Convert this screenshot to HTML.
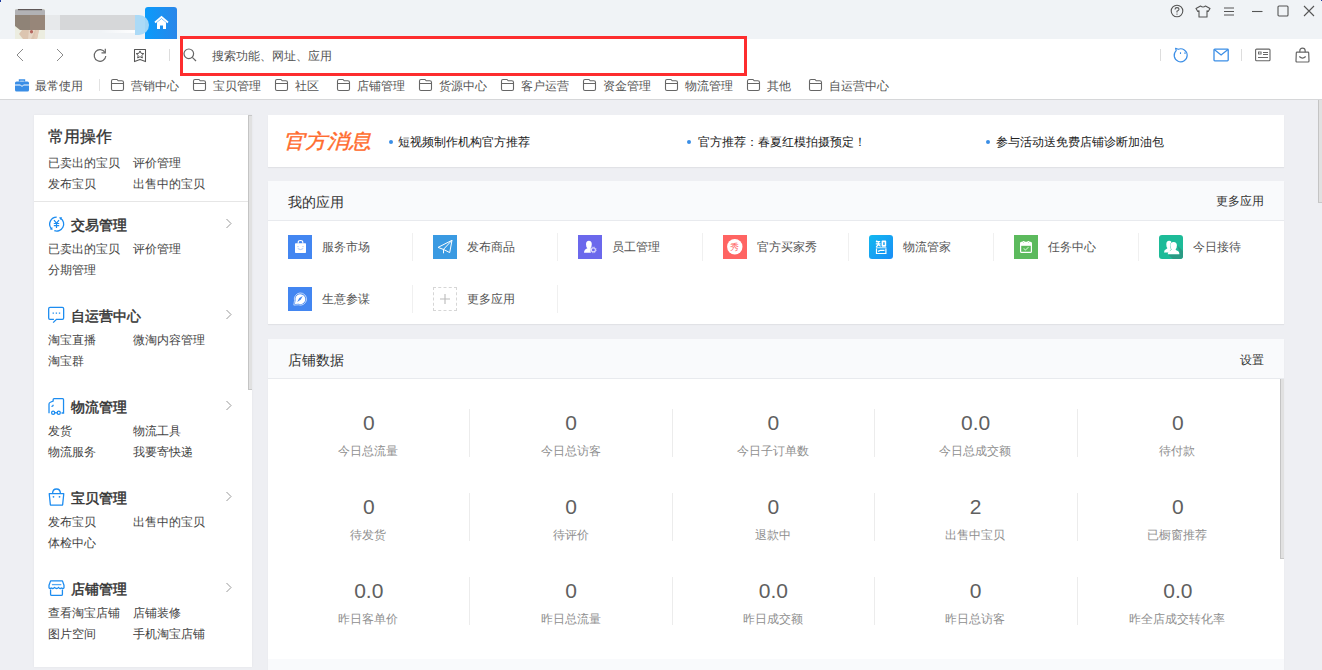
<!DOCTYPE html>
<html><head><meta charset="utf-8">
<style>
*{margin:0;padding:0;box-sizing:border-box}
html,body{width:1322px;height:670px;overflow:hidden}
body{position:relative;background:#eeeff3;font-family:"Liberation Sans",sans-serif;font-size:12px;color:#333}
.a{position:absolute}
.t{position:absolute;white-space:nowrap;line-height:16px}
svg{position:absolute;overflow:visible}
</style></head><body>

<!-- TITLE BAR -->
<div class="a" style="left:0;top:0;width:1322px;height:39px;background:#f0f3f6"></div>
<div class="a" style="left:0;top:0;width:1px;height:2px;background:#1d3aa0"></div>
<div class="a" style="left:1321px;top:0;width:1px;height:1px;background:#1d3aa0"></div>
<!-- avatar -->
<svg style="left:15px;top:9px" width="30" height="30" viewBox="0 0 30 30"><rect x="0" y="0" width="30" height="30" fill="#ecede0"/><path d="M7 21 L24 21 L22 30 L8 30 L4 25 Z" fill="#dcc5b0"/><path d="M14 21 L20 21 L16 30 L13 30 Z" fill="#e6d6c6"/><path d="M21 21 L24 21 L22 30 L19 30 Z" fill="#e3cbb8"/><ellipse cx="16.5" cy="22.8" rx="1.6" ry="1.8" fill="#b4655d"/><path d="M0 1.5 Q0 0 3 0 H27 Q30 0 30 2 V6 H0 Z" fill="#b2b2b5"/><path d="M3 0.6 H27" stroke="#5f5757" stroke-width="1.2"/><path d="M0 6 H30 V21 H5 L0 17 Z" fill="#8f8377"/><rect x="15" y="6" width="15" height="15" fill="#978679"/></svg>
<!-- blurred name -->
<div class="a" style="left:45px;top:15px;width:15px;height:15px;background:#e7e9eb"></div>
<div class="a" style="left:60px;top:15px;width:75px;height:15px;background:#d6d7d9"></div>
<div class="a" style="left:100px;top:30px;width:35px;height:3px;background:linear-gradient(90deg,rgba(255,255,255,0),rgba(255,255,255,0.9))"></div>
<!-- home tab -->
<div class="a" style="left:145px;top:7px;width:32px;height:32px;border-radius:3px 3px 0 0;background:linear-gradient(90deg,#0a9bfb,#2a86e9)"></div>
<svg style="left:154px;top:16px" width="15" height="13" viewBox="0 0 15 13"><path d="M1 6.5 L7.5 1 L14 6.5" fill="none" stroke="#fff" stroke-width="1.8"/><path d="M3 6.5 L7.5 2.7 L12 6.5 V13 H9 V9.5 H6 V13 H3 Z" fill="#fff"/></svg>

<div class="a" style="left:135px;top:15px;width:14px;height:20px;border-radius:0 10px 10px 0;background:#a6d8f7;opacity:0.95"></div>
<!-- window controls -->
<svg style="left:1170px;top:4px" width="14" height="14" viewBox="0 0 14 14"><circle cx="7" cy="7" r="5.8" fill="none" stroke="#555" stroke-width="1.1"/><path d="M5 5.4 Q5 3.6 7 3.6 Q9 3.6 9 5.3 Q9 6.4 7 7.2 V8.4" fill="none" stroke="#555" stroke-width="1.1"/><circle cx="7" cy="10.1" r="0.7" fill="#555"/></svg>
<svg style="left:1195px;top:5px" width="16" height="13" viewBox="0 0 16 13"><path d="M5.5 1 L1 3.5 L2.8 6.5 L4 5.8 V12 H12 V5.8 L13.2 6.5 L15 3.5 L10.5 1 Q8 3 5.5 1 Z" fill="none" stroke="#555" stroke-width="1.1" stroke-linejoin="round"/></svg>
<svg style="left:1223px;top:7px" width="12" height="10" viewBox="0 0 12 10"><path d="M1 1 H11 M1 4.5 H11 M1 8 H11" stroke="#555" stroke-width="1.1"/></svg>
<svg style="left:1252px;top:10px" width="11" height="3" viewBox="0 0 11 3"><path d="M0 1.5 H10.5" stroke="#555" stroke-width="1.1"/></svg>
<svg style="left:1277px;top:5px" width="12" height="12" viewBox="0 0 12 12"><rect x="1" y="1" width="10" height="10" rx="1" fill="none" stroke="#555" stroke-width="1.1"/></svg>
<svg style="left:1303px;top:5px" width="12" height="12" viewBox="0 0 12 12"><path d="M1 1 L11 11 M11 1 L1 11" stroke="#555" stroke-width="1.1"/></svg>

<!-- TOOLBAR -->
<div class="a" style="left:0;top:39px;width:1322px;height:60px;background:#fff"></div>
<div class="a" style="left:0;top:99px;width:1322px;height:1px;background:#d6d7d9"></div>
<svg style="left:16px;top:48px" width="8" height="14" viewBox="0 0 8 14"><path d="M7 1 L1 7 L7 13" fill="none" stroke="#8a8a8a" stroke-width="1"/></svg>
<svg style="left:56px;top:48px" width="8" height="14" viewBox="0 0 8 14"><path d="M1 1 L7 7 L1 13" fill="none" stroke="#8a8a8a" stroke-width="1"/></svg>
<svg style="left:93px;top:48px" width="14" height="14" viewBox="0 0 14 14"><path d="M12 4.5 A5.8 5.8 0 1 0 12.8 8" fill="none" stroke="#666" stroke-width="1.2"/><path d="M12.3 0.8 V4.8 H8.5" fill="none" stroke="#666" stroke-width="1.2"/></svg>
<svg style="left:133px;top:48px" width="14" height="15" viewBox="0 0 14 15"><path d="M1.5 1.5 H12.5 V13.6 L7 11.6 L1.5 13.6 Z" fill="none" stroke="#555" stroke-width="1.05" stroke-linejoin="round"/><path d="M7 2.9 L8.12 5.3 L10.8 5.6 L8.81 7.4 L9.35 10 L7 8.7 L4.65 10 L5.19 7.4 L3.2 5.6 L5.88 5.3 Z" fill="none" stroke="#555" stroke-width="1" stroke-linejoin="round"/></svg>
<div class="a" style="left:169px;top:49px;width:1px;height:12px;background:#ddd"></div>

<!-- search box -->
<div class="a" style="left:180px;top:36px;width:567px;height:40px;border:3px solid #fd2d2e;background:#fff"></div>
<svg style="left:183px;top:48px" width="14" height="14" viewBox="0 0 14 14"><circle cx="5.8" cy="5.8" r="4.8" fill="none" stroke="#666" stroke-width="1.2"/><path d="M9.3 9.3 L13 13" stroke="#666" stroke-width="1.2"/></svg>
<div class="t" style="left:212px;top:48px;color:#555">搜索功能、网址、应用</div>

<!-- right icons -->
<div class="a" style="left:1160px;top:49px;width:1px;height:12px;background:#ddd"></div>
<svg style="left:1172px;top:47px" width="17" height="16" viewBox="0 0 17 16"><path d="M4.2 3.6 A6.5 6.5 0 1 0 6.2 2.3 L3.6 1.3 Z" fill="none" stroke="#3b8ee6" stroke-width="1.2" stroke-linejoin="round"/><path d="M8.5 5.2 V7 M13 5.2 V7" stroke="#3b8ee6" stroke-width="1.1"/></svg>
<svg style="left:1213px;top:48px" width="16" height="14" viewBox="0 0 16 14"><rect x="1" y="1.2" width="14.2" height="11.6" rx="0.8" fill="none" stroke="#3b8ee6" stroke-width="1.3"/><path d="M1.2 1.6 L8.1 7 L15 1.6" fill="none" stroke="#3b8ee6" stroke-width="1.3"/></svg>
<div class="a" style="left:1241px;top:49px;width:1px;height:12px;background:#ddd"></div>
<svg style="left:1255px;top:48px" width="16" height="14" viewBox="0 0 16 14"><rect x="0.6" y="1.1" width="14.4" height="11.6" rx="1" fill="none" stroke="#666" stroke-width="1.1"/><rect x="3.5" y="4" width="2.6" height="2" fill="none" stroke="#666" stroke-width="0.9"/><path d="M8 4.5 H13 M8 6.5 H13 M3 9.5 H13" stroke="#666" stroke-width="1"/></svg>
<svg style="left:1295px;top:47px" width="15" height="16" viewBox="0 0 15 16"><path d="M2 5.2 H13 Q13.6 5.2 13.7 5.9 L14 14 Q14 15 13 15 H2 Q1 15 1 14 L1.3 5.9 Q1.4 5.2 2 5.2 Z" fill="none" stroke="#666" stroke-width="1.2" stroke-linejoin="round"/><path d="M4.8 5.2 V4 Q4.8 1.2 7.5 1.2 Q10.2 1.2 10.2 4 V5.2" fill="none" stroke="#666" stroke-width="1.2"/><path d="M4.3 9.5 Q7.5 12.6 10.7 9.5" fill="none" stroke="#666" stroke-width="1.2"/></svg>

<!-- BOOKMARKS -->
<svg style="left:15px;top:79px" width="14" height="13" viewBox="0 0 14 13"><path d="M4.5 2.5 V1 H9.5 V2.5" fill="none" stroke="#3a8ee6" stroke-width="1.4"/><rect x="0" y="2.5" width="14" height="10" rx="1.5" fill="#3a8ee6"/><path d="M0 6 H5.5 L7 7.5 L8.5 6 H14" fill="none" stroke="#fff" stroke-width="1"/></svg>
<div class="t" style="left:35px;top:78px;color:#555">最常使用</div>
<div class="a" style="left:99px;top:79px;width:1px;height:12px;background:#e2e2e2"></div>
<svg style="left:110px;top:78px" width="15" height="14" viewBox="0 0 15 14"><path d="M1.5 3 Q1.5 1.5 3 1.5 H7 L8.2 2.8 H11.8 Q13.5 2.8 13.5 4.5 V11 Q13.5 12.5 12 12.5 H3 Q1.5 12.5 1.5 11 Z M1.5 5.5 H13.5" fill="none" stroke="#666" stroke-width="1.1"/></svg>
<div class="t" style="left:131px;top:78px;color:#555">营销中心</div>
<svg style="left:192px;top:78px" width="15" height="14" viewBox="0 0 15 14"><path d="M1.5 3 Q1.5 1.5 3 1.5 H7 L8.2 2.8 H11.8 Q13.5 2.8 13.5 4.5 V11 Q13.5 12.5 12 12.5 H3 Q1.5 12.5 1.5 11 Z M1.5 5.5 H13.5" fill="none" stroke="#666" stroke-width="1.1"/></svg>
<div class="t" style="left:213px;top:78px;color:#555">宝贝管理</div>
<svg style="left:274px;top:78px" width="15" height="14" viewBox="0 0 15 14"><path d="M1.5 3 Q1.5 1.5 3 1.5 H7 L8.2 2.8 H11.8 Q13.5 2.8 13.5 4.5 V11 Q13.5 12.5 12 12.5 H3 Q1.5 12.5 1.5 11 Z M1.5 5.5 H13.5" fill="none" stroke="#666" stroke-width="1.1"/></svg>
<div class="t" style="left:295px;top:78px;color:#555">社区</div>
<svg style="left:336px;top:78px" width="15" height="14" viewBox="0 0 15 14"><path d="M1.5 3 Q1.5 1.5 3 1.5 H7 L8.2 2.8 H11.8 Q13.5 2.8 13.5 4.5 V11 Q13.5 12.5 12 12.5 H3 Q1.5 12.5 1.5 11 Z M1.5 5.5 H13.5" fill="none" stroke="#666" stroke-width="1.1"/></svg>
<div class="t" style="left:357px;top:78px;color:#555">店铺管理</div>
<svg style="left:418px;top:78px" width="15" height="14" viewBox="0 0 15 14"><path d="M1.5 3 Q1.5 1.5 3 1.5 H7 L8.2 2.8 H11.8 Q13.5 2.8 13.5 4.5 V11 Q13.5 12.5 12 12.5 H3 Q1.5 12.5 1.5 11 Z M1.5 5.5 H13.5" fill="none" stroke="#666" stroke-width="1.1"/></svg>
<div class="t" style="left:439px;top:78px;color:#555">货源中心</div>
<svg style="left:500px;top:78px" width="15" height="14" viewBox="0 0 15 14"><path d="M1.5 3 Q1.5 1.5 3 1.5 H7 L8.2 2.8 H11.8 Q13.5 2.8 13.5 4.5 V11 Q13.5 12.5 12 12.5 H3 Q1.5 12.5 1.5 11 Z M1.5 5.5 H13.5" fill="none" stroke="#666" stroke-width="1.1"/></svg>
<div class="t" style="left:521px;top:78px;color:#555">客户运营</div>
<svg style="left:582px;top:78px" width="15" height="14" viewBox="0 0 15 14"><path d="M1.5 3 Q1.5 1.5 3 1.5 H7 L8.2 2.8 H11.8 Q13.5 2.8 13.5 4.5 V11 Q13.5 12.5 12 12.5 H3 Q1.5 12.5 1.5 11 Z M1.5 5.5 H13.5" fill="none" stroke="#666" stroke-width="1.1"/></svg>
<div class="t" style="left:603px;top:78px;color:#555">资金管理</div>
<svg style="left:664px;top:78px" width="15" height="14" viewBox="0 0 15 14"><path d="M1.5 3 Q1.5 1.5 3 1.5 H7 L8.2 2.8 H11.8 Q13.5 2.8 13.5 4.5 V11 Q13.5 12.5 12 12.5 H3 Q1.5 12.5 1.5 11 Z M1.5 5.5 H13.5" fill="none" stroke="#666" stroke-width="1.1"/></svg>
<div class="t" style="left:685px;top:78px;color:#555">物流管理</div>
<svg style="left:746px;top:78px" width="15" height="14" viewBox="0 0 15 14"><path d="M1.5 3 Q1.5 1.5 3 1.5 H7 L8.2 2.8 H11.8 Q13.5 2.8 13.5 4.5 V11 Q13.5 12.5 12 12.5 H3 Q1.5 12.5 1.5 11 Z M1.5 5.5 H13.5" fill="none" stroke="#666" stroke-width="1.1"/></svg>
<div class="t" style="left:767px;top:78px;color:#555">其他</div>
<svg style="left:808px;top:78px" width="15" height="14" viewBox="0 0 15 14"><path d="M1.5 3 Q1.5 1.5 3 1.5 H7 L8.2 2.8 H11.8 Q13.5 2.8 13.5 4.5 V11 Q13.5 12.5 12 12.5 H3 Q1.5 12.5 1.5 11 Z M1.5 5.5 H13.5" fill="none" stroke="#666" stroke-width="1.1"/></svg>
<div class="t" style="left:829px;top:78px;color:#555">自运营中心</div>
<!-- SIDEBAR -->
<div class="a" style="left:34px;top:115px;width:218px;height:552px;background:#fff;box-shadow:0 0 2px rgba(0,0,0,0.06)"></div>
<div class="a" style="left:248px;top:115px;width:4px;height:275px;background:#e1e1e1;border-left:1px solid #c4c4c4;border-top:1px solid #c8c8c8;border-bottom:1px solid #c8c8c8"></div>
<div class="t" style="left:48px;top:127px;font-size:16px;line-height:20px;color:#333;-webkit-text-stroke:0.3px #333">常用操作</div>
<div class="t" style="left:48px;top:155px;color:#444">已卖出的宝贝</div>
<div class="t" style="left:133px;top:155px;color:#444">评价管理</div>
<div class="t" style="left:48px;top:176px;color:#444">发布宝贝</div>
<div class="t" style="left:133px;top:176px;color:#444">出售中的宝贝</div>
<div class="a" style="left:34px;top:201px;width:214px;height:1px;background:#e6e6e6"></div>
<svg style="left:47px;top:214px" width="19" height="19" viewBox="0 0 19 19"><path d="M9.7 3.1 A7 7 0 0 0 4.34 14.6 M7.31 16.68 A7 7 0 0 0 13.71 4.37" fill="none" stroke="#1c8cf0" stroke-width="1.3"/><path d="M5.49 15.99 L2.65 15.23 L5.27 13.05 Z M12.23 3.34 L15.17 3.32 L13.23 6.1 Z" fill="#1c8cf0"/><path d="M7 6.2 L9.5 9.2 L12 6.2 M9.5 9.2 V14 M6.8 9.5 H12.2 M6.8 11.6 H12.2" fill="none" stroke="#1c8cf0" stroke-width="1.2"/></svg>
<div class="t" style="left:71px;top:216px;font-size:14px;line-height:18px;color:#333;-webkit-text-stroke:0.45px #333">交易管理</div>
<svg style="left:225px;top:218px" width="8" height="11" viewBox="0 0 8 11"><path d="M1.5 1 L6 5.5 L1.5 10" fill="none" stroke="#999" stroke-width="1"/></svg>
<div class="t" style="left:48px;top:241px;color:#444">已卖出的宝贝</div>
<div class="t" style="left:133px;top:241px;color:#444">评价管理</div>
<div class="t" style="left:48px;top:262px;color:#444">分期管理</div>
<svg style="left:47px;top:305px" width="19" height="19" viewBox="0 0 17 17"><path d="M6.2 12.8 H2.6 Q1.5 12.8 1.5 11.6 V3.4 Q1.5 2.2 2.7 2.2 H13.7 Q14.9 2.2 14.9 3.4 V11.6 Q14.9 12.8 13.7 12.8 H8.5 L5.5 15.8" fill="none" stroke="#1c8cf0" stroke-width="1.15"/><path d="M5 7.2 H6.2 M7.8 7.2 H9 M10.6 7.2 H11.8" stroke="#1c8cf0" stroke-width="1.15"/></svg>
<div class="t" style="left:71px;top:307px;font-size:14px;line-height:18px;color:#333;-webkit-text-stroke:0.45px #333">自运营中心</div>
<svg style="left:225px;top:309px" width="8" height="11" viewBox="0 0 8 11"><path d="M1.5 1 L6 5.5 L1.5 10" fill="none" stroke="#999" stroke-width="1"/></svg>
<div class="t" style="left:48px;top:332px;color:#444">淘宝直播</div>
<div class="t" style="left:133px;top:332px;color:#444">微淘内容管理</div>
<div class="t" style="left:48px;top:353px;color:#444">淘宝群</div>
<svg style="left:47px;top:396px" width="19" height="19" viewBox="0 0 17 17"><path d="M1.8 15.5 V7.2 Q1.8 6 3 5.6 L5.5 4.6 V3.3 Q5.5 2.4 6.4 2.4 H14 Q14.8 2.4 14.8 3.3 V15.2 H13 M5.5 7.8 Q5.5 9.4 4 9.2" fill="none" stroke="#1c8cf0" stroke-width="1.15"/><circle cx="5.5" cy="15" r="1.4" fill="none" stroke="#1c8cf0" stroke-width="1.15"/><circle cx="10.5" cy="15" r="1.4" fill="none" stroke="#1c8cf0" stroke-width="1.15"/><path d="M6.9 15 H9.1" stroke="#1c8cf0" stroke-width="1.15"/></svg>
<div class="t" style="left:71px;top:398px;font-size:14px;line-height:18px;color:#333;-webkit-text-stroke:0.45px #333">物流管理</div>
<svg style="left:225px;top:400px" width="8" height="11" viewBox="0 0 8 11"><path d="M1.5 1 L6 5.5 L1.5 10" fill="none" stroke="#999" stroke-width="1"/></svg>
<div class="t" style="left:48px;top:423px;color:#444">发货</div>
<div class="t" style="left:133px;top:423px;color:#444">物流工具</div>
<div class="t" style="left:48px;top:444px;color:#444">物流服务</div>
<div class="t" style="left:133px;top:444px;color:#444">我要寄快递</div>
<svg style="left:47px;top:487px" width="19" height="19" viewBox="0 0 17 17"><path d="M2 6 H15 L14 15.8 Q13.8 16.3 13.2 16.3 H3.8 Q3.2 16.3 3 15.8 Z" fill="none" stroke="#1c8cf0" stroke-width="1.15" stroke-linejoin="round"/><path d="M5 5.8 Q5 1.8 8.5 1.8 Q12 1.8 12 5.8" fill="none" stroke="#1c8cf0" stroke-width="1.15"/><circle cx="5.8" cy="8.8" r="0.8" fill="#1c8cf0"/><circle cx="11.2" cy="8.8" r="0.8" fill="#1c8cf0"/></svg>
<div class="t" style="left:71px;top:489px;font-size:14px;line-height:18px;color:#333;-webkit-text-stroke:0.45px #333">宝贝管理</div>
<svg style="left:225px;top:491px" width="8" height="11" viewBox="0 0 8 11"><path d="M1.5 1 L6 5.5 L1.5 10" fill="none" stroke="#999" stroke-width="1"/></svg>
<div class="t" style="left:48px;top:514px;color:#444">发布宝贝</div>
<div class="t" style="left:133px;top:514px;color:#444">出售中的宝贝</div>
<div class="t" style="left:48px;top:535px;color:#444">体检中心</div>
<svg style="left:47px;top:578px" width="19" height="19" viewBox="0 0 17 17"><path d="M3.2 2.6 H13.8 L15.2 6.5 V8.8 Q14.2 10 13 8.8 Q11.9 10 10.7 8.8 L10.4 8.4 Q8.6 10.4 6.8 8.4 L6.5 8.8 Q5 10 3.8 8.8 Q2.8 10 1.8 8.8 V6.5 Z" fill="none" stroke="#1c8cf0" stroke-width="1.15" stroke-linejoin="round"/><path d="M4.4 5.9 H12.8" stroke="#1c8cf0" stroke-opacity="0.75" stroke-width="1.15"/><path d="M3.2 10.2 V14.5 Q3.2 15.6 4.3 15.6 H12.7 Q13.8 15.6 13.8 14.5 V10.2" fill="none" stroke="#1c8cf0" stroke-width="1.15"/></svg>
<div class="t" style="left:71px;top:580px;font-size:14px;line-height:18px;color:#333;-webkit-text-stroke:0.45px #333">店铺管理</div>
<svg style="left:225px;top:582px" width="8" height="11" viewBox="0 0 8 11"><path d="M1.5 1 L6 5.5 L1.5 10" fill="none" stroke="#999" stroke-width="1"/></svg>
<div class="t" style="left:48px;top:605px;color:#444">查看淘宝店铺</div>
<div class="t" style="left:133px;top:605px;color:#444">店铺装修</div>
<div class="t" style="left:48px;top:626px;color:#444">图片空间</div>
<div class="t" style="left:133px;top:626px;color:#444">手机淘宝店铺</div>
<!-- MAIN -->
<div class="a" style="left:268px;top:115px;width:1016px;height:52px;background:#fff;box-shadow:0 1px 1px rgba(0,0,0,0.05)"></div>
<div class="t" style="left:283px;top:128px;font-size:20px;line-height:26px;font-style:italic;color:#ff6c2e;-webkit-text-stroke:0.4px #ff6c2e;transform:scaleX(1.1);transform-origin:0 0">官方消息</div>
<div class="a" style="left:389px;top:140px;width:4px;height:4px;border-radius:50%;background:#3a8ee6"></div>
<div class="t" style="left:398px;top:134px;color:#222">短视频制作机构官方推荐</div>
<div class="a" style="left:687px;top:140px;width:4px;height:4px;border-radius:50%;background:#3a8ee6"></div>
<div class="t" style="left:698px;top:134px;color:#222">官方推荐：春夏红模拍摄预定！</div>
<div class="a" style="left:986px;top:140px;width:4px;height:4px;border-radius:50%;background:#3a8ee6"></div>
<div class="t" style="left:996px;top:134px;color:#222">参与活动送免费店铺诊断加油包</div>
<div class="a" style="left:268px;top:181px;width:1016px;height:143px;background:#fff;box-shadow:0 1px 1px rgba(0,0,0,0.05)"></div>
<div class="a" style="left:268px;top:181px;width:1016px;height:40px;background:#f9fafc;border-bottom:1px solid #e8eaee"></div>
<div class="t" style="left:288px;top:193px;font-size:14px;line-height:18px;color:#333">我的应用</div>
<div class="t" style="left:1216px;top:193px;color:#333">更多应用</div>
<div class="a" style="left:288px;top:235px;width:24px;height:24px;background:#4386f1;"><svg style="left:0;top:0;overflow:hidden;" width="24" height="24" viewBox="0 0 24 24"><rect x="7" y="8.3" width="11" height="9.7" rx="0.7" fill="#fff"/><path d="M10.2 8.5 V7.2 Q10.2 5.5 12.5 5.5 Q14.8 5.5 14.8 7.2 V8.5" fill="none" stroke="#fff" stroke-width="1.1"/><path d="M9.4 11.6 H10.6 M14.4 11.6 H15.6" stroke="#9fc0f7" stroke-width="0.9"/><path d="M9.8 13.6 Q12.5 15.6 15.2 13.6" fill="none" stroke="#9fc0f7" stroke-width="0.9"/></svg></div>
<div class="t" style="left:322px;top:239px;color:#555">服务市场</div>
<div class="a" style="left:412px;top:233px;width:1px;height:28px;background:#f0f0f0"></div>
<div class="a" style="left:433px;top:235px;width:24px;height:24px;background:#3a9ae2;"><svg style="left:0;top:0;overflow:hidden;" width="24" height="24" viewBox="0 0 24 24"><path d="M5 12.4 L19 5.3 L16.7 17.6 L10.9 14.6 Z M19 5.3 L10.5 14.3 V18.3" fill="none" stroke="#fff" stroke-width="1" stroke-linejoin="round"/></svg></div>
<div class="t" style="left:467px;top:239px;color:#555">发布商品</div>
<div class="a" style="left:557px;top:233px;width:1px;height:28px;background:#f0f0f0"></div>
<div class="a" style="left:578px;top:235px;width:24px;height:24px;background:#6b68ec;"><svg style="left:0;top:0;overflow:hidden;" width="24" height="24" viewBox="0 0 24 24"><path d="M6 17.8 Q6 14.3 9.4 13.2 Q8 12 8 9.2 Q8 5.7 10.9 5.7 Q13.8 5.7 13.8 9.2 Q13.8 12 12.4 13.2 Q12.9 13.4 13.3 13.6 Q12.2 15.8 12.9 17.8 Z" fill="#fff"/><circle cx="15.4" cy="14.9" r="2" fill="none" stroke="#dedcfd" stroke-width="1.1"/><circle cx="15.4" cy="14.9" r="2.9" fill="none" stroke="#c9c7fa" stroke-width="0.8" stroke-dasharray="1.2 1.07"/></svg></div>
<div class="t" style="left:612px;top:239px;color:#555">员工管理</div>
<div class="a" style="left:702px;top:233px;width:1px;height:28px;background:#f0f0f0"></div>
<div class="a" style="left:723px;top:235px;width:24px;height:24px;background:#ff6462;"><svg style="left:0;top:0;overflow:hidden;" width="24" height="24" viewBox="0 0 24 24"><circle cx="11.8" cy="11.8" r="7.7" fill="#fff"/><text x="11.8" y="15" font-size="9" text-anchor="middle" fill="#ff6462">秀</text></svg></div>
<div class="t" style="left:757px;top:239px;color:#555">官方买家秀</div>
<div class="a" style="left:848px;top:233px;width:1px;height:28px;background:#f0f0f0"></div>
<div class="a" style="left:869px;top:235px;width:24px;height:24px;background:linear-gradient(135deg,#12b8ef,#1a8df6);border-radius:3px;"><svg style="left:0;top:0;overflow:hidden;border-radius:3px;" width="24" height="24" viewBox="0 0 24 24"><path d="M8 5.6 L7.2 7.3 M7.6 6.6 H11.2 M6.8 8.9 H11.6 M9.3 6.6 V9.5 Q8.8 11 7 11.8 M9.6 9.6 L11.6 11.4" fill="none" stroke="#fff" stroke-width="1.2"/><rect x="12.6" y="5.6" width="4.6" height="6.2" rx="0.8" fill="#fff"/><rect x="14.2" y="7.2" width="1.5" height="2.8" fill="#1aa4f2"/><path d="M6.9 12.8 H17.4" stroke="#d6f0fd" stroke-width="1.1"/><path d="M7.5 13.5 V18.5 H16.9 V13.5 M9 16.4 L11.5 15.3 H15.5" fill="none" stroke="#fff" stroke-width="1.2"/></svg></div>
<div class="t" style="left:903px;top:239px;color:#555">物流管家</div>
<div class="a" style="left:993px;top:233px;width:1px;height:28px;background:#f0f0f0"></div>
<div class="a" style="left:1014px;top:235px;width:24px;height:24px;background:#5cba5d;"><svg style="left:0;top:0;overflow:hidden;" width="24" height="24" viewBox="0 0 24 24"><rect x="6.6" y="7.4" width="10.8" height="10" rx="1" fill="none" stroke="#fff" stroke-width="1.2"/><rect x="6.6" y="7.4" width="10.8" height="3.4" fill="#fff"/><circle cx="9.6" cy="7" r="1.1" fill="#fff"/><circle cx="14.4" cy="7" r="1.1" fill="#fff"/><circle cx="9.6" cy="7.6" r="0.45" fill="#5cba5d"/><circle cx="14.4" cy="7.6" r="0.45" fill="#5cba5d"/><path d="M9.6 13.4 L11.4 15.1 L14.6 12.2" fill="none" stroke="#b5ecb5" stroke-width="1.1"/></svg></div>
<div class="t" style="left:1048px;top:239px;color:#555">任务中心</div>
<div class="a" style="left:1138px;top:233px;width:1px;height:28px;background:#f0f0f0"></div>
<div class="a" style="left:1159px;top:235px;width:24px;height:24px;background:#1dbb98;border-radius:3px;"><svg style="left:0;top:0;overflow:hidden;border-radius:3px;" width="24" height="24" viewBox="0 0 24 24"><path d="M17.9 10 L25 17 V25 H15 L8.8 19.2 H20.4 V16.5 Z" fill="#2a9b84"/><path d="M5 17.4 Q5 14.6 7.4 14 Q8.3 13.7 8.4 13 Q7.3 12 7.3 9.5 Q7.3 5.8 10.1 5.8 Q11.7 5.8 12.5 7 Q11 8.5 11 10.7 Q11 13.2 12.2 14.2 L9.3 17.4 Z" fill="#fff"/><path d="M8.8 19.2 Q8.8 16.1 11.5 15.4 Q12.5 15.1 12.6 14.3 Q11.3 13.1 11.3 10.6 Q11.3 6.9 14.6 6.9 Q17.9 6.9 17.9 10.6 Q17.9 13.1 16.6 14.3 Q16.7 15.1 17.7 15.4 Q20.4 16.1 20.4 19.2 Z" fill="#fff"/></svg></div>
<div class="t" style="left:1193px;top:239px;color:#555">今日接待</div>
<div class="a" style="left:288px;top:287px;width:24px;height:24px;background:#4386f1"><svg style="left:0;top:0" width="24" height="24" viewBox="0 0 24 24"><path d="M5.8 18.1 L6.5 13.6 A6.1 6.1 0 1 1 10.3 17.8 Z" fill="none" stroke="#c9dcfb" stroke-width="0.9"/><path d="M6.9 17 L7.5 13.5 A5 5 0 1 1 10.5 16.8 Z" fill="#fff"/><path d="M14.8 9 L12.6 12.7 L9.2 14.9 L11.3 11.1 Z" fill="#4386f1"/></svg></div>
<div class="t" style="left:322px;top:291px;color:#555">生意参谋</div>
<div class="a" style="left:412px;top:285px;width:1px;height:28px;background:#f0f0f0"></div>
<div class="a" style="left:433px;top:287px;width:24px;height:24px;border:1px dashed #d6d6d6"></div>
<svg style="left:433px;top:287px" width="24" height="24" viewBox="0 0 24 24"><path d="M12 7 V17 M7 12 H17" stroke="#bbb" stroke-width="1.1"/></svg>
<div class="t" style="left:467px;top:291px;color:#555">更多应用</div>
<div class="a" style="left:557px;top:285px;width:1px;height:28px;background:#f0f0f0"></div>
<div class="a" style="left:268px;top:339px;width:1016px;height:331px;background:#fff;box-shadow:0 1px 1px rgba(0,0,0,0.05)"></div>
<div class="a" style="left:268px;top:339px;width:1016px;height:40px;background:#f9fafc;border-bottom:1px solid #e8eaee"></div>
<div class="a" style="left:268px;top:659px;width:1016px;height:11px;background:#f9fafc"></div>
<div class="t" style="left:288px;top:351px;font-size:14px;line-height:18px;color:#333">店铺数据</div>
<div class="t" style="left:1240px;top:352px;color:#333">设置</div>
<div class="a" style="left:1280px;top:379px;width:4px;height:180px;background:#e1e1e1;border-left:1px solid #c4c4c4;border-bottom:1px solid #c8c8c8"></div>
<div class="t" style="left:267.75px;top:411px;width:202px;text-align:center;font-size:21px;line-height:24px;color:#606060">0</div>
<div class="t" style="left:267.25px;top:443px;width:202px;text-align:center;color:#8f8f8f">今日总流量</div>
<div class="a" style="left:469px;top:409px;width:1px;height:48px;background:#ececec"></div>
<div class="t" style="left:470.05px;top:411px;width:202px;text-align:center;font-size:21px;line-height:24px;color:#606060">0</div>
<div class="t" style="left:469.55px;top:443px;width:202px;text-align:center;color:#8f8f8f">今日总访客</div>
<div class="a" style="left:672px;top:409px;width:1px;height:48px;background:#ececec"></div>
<div class="t" style="left:672.35px;top:411px;width:202px;text-align:center;font-size:21px;line-height:24px;color:#606060">0</div>
<div class="t" style="left:671.85px;top:443px;width:202px;text-align:center;color:#8f8f8f">今日子订单数</div>
<div class="a" style="left:874px;top:409px;width:1px;height:48px;background:#ececec"></div>
<div class="t" style="left:874.65px;top:411px;width:202px;text-align:center;font-size:21px;line-height:24px;color:#606060">0.0</div>
<div class="t" style="left:874.15px;top:443px;width:202px;text-align:center;color:#8f8f8f">今日总成交额</div>
<div class="a" style="left:1077px;top:409px;width:1px;height:48px;background:#ececec"></div>
<div class="t" style="left:1076.95px;top:411px;width:202px;text-align:center;font-size:21px;line-height:24px;color:#606060">0</div>
<div class="t" style="left:1076.45px;top:443px;width:202px;text-align:center;color:#8f8f8f">待付款</div>
<div class="t" style="left:267.75px;top:495px;width:202px;text-align:center;font-size:21px;line-height:24px;color:#606060">0</div>
<div class="t" style="left:267.25px;top:527px;width:202px;text-align:center;color:#8f8f8f">待发货</div>
<div class="a" style="left:469px;top:493px;width:1px;height:48px;background:#ececec"></div>
<div class="t" style="left:470.05px;top:495px;width:202px;text-align:center;font-size:21px;line-height:24px;color:#606060">0</div>
<div class="t" style="left:469.55px;top:527px;width:202px;text-align:center;color:#8f8f8f">待评价</div>
<div class="a" style="left:672px;top:493px;width:1px;height:48px;background:#ececec"></div>
<div class="t" style="left:672.35px;top:495px;width:202px;text-align:center;font-size:21px;line-height:24px;color:#606060">0</div>
<div class="t" style="left:671.85px;top:527px;width:202px;text-align:center;color:#8f8f8f">退款中</div>
<div class="a" style="left:874px;top:493px;width:1px;height:48px;background:#ececec"></div>
<div class="t" style="left:874.65px;top:495px;width:202px;text-align:center;font-size:21px;line-height:24px;color:#606060">2</div>
<div class="t" style="left:874.15px;top:527px;width:202px;text-align:center;color:#8f8f8f">出售中宝贝</div>
<div class="a" style="left:1077px;top:493px;width:1px;height:48px;background:#ececec"></div>
<div class="t" style="left:1076.95px;top:495px;width:202px;text-align:center;font-size:21px;line-height:24px;color:#606060">0</div>
<div class="t" style="left:1076.45px;top:527px;width:202px;text-align:center;color:#8f8f8f">已橱窗推荐</div>
<div class="t" style="left:267.75px;top:579px;width:202px;text-align:center;font-size:21px;line-height:24px;color:#606060">0.0</div>
<div class="t" style="left:267.25px;top:611px;width:202px;text-align:center;color:#8f8f8f">昨日客单价</div>
<div class="a" style="left:469px;top:577px;width:1px;height:48px;background:#ececec"></div>
<div class="t" style="left:470.05px;top:579px;width:202px;text-align:center;font-size:21px;line-height:24px;color:#606060">0</div>
<div class="t" style="left:469.55px;top:611px;width:202px;text-align:center;color:#8f8f8f">昨日总流量</div>
<div class="a" style="left:672px;top:577px;width:1px;height:48px;background:#ececec"></div>
<div class="t" style="left:672.35px;top:579px;width:202px;text-align:center;font-size:21px;line-height:24px;color:#606060">0.0</div>
<div class="t" style="left:671.85px;top:611px;width:202px;text-align:center;color:#8f8f8f">昨日成交额</div>
<div class="a" style="left:874px;top:577px;width:1px;height:48px;background:#ececec"></div>
<div class="t" style="left:874.65px;top:579px;width:202px;text-align:center;font-size:21px;line-height:24px;color:#606060">0</div>
<div class="t" style="left:874.15px;top:611px;width:202px;text-align:center;color:#8f8f8f">昨日总访客</div>
<div class="a" style="left:1077px;top:577px;width:1px;height:48px;background:#ececec"></div>
<div class="t" style="left:1076.95px;top:579px;width:202px;text-align:center;font-size:21px;line-height:24px;color:#606060">0.0</div>
<div class="t" style="left:1076.45px;top:611px;width:202px;text-align:center;color:#8f8f8f">昨全店成交转化率</div>
<div class="a" style="left:1318px;top:100px;width:4px;height:103px;background:#e1e1e1;border-left:1px solid #c4c4c4;border-bottom:1px solid #c8c8c8"></div>
</body></html>
